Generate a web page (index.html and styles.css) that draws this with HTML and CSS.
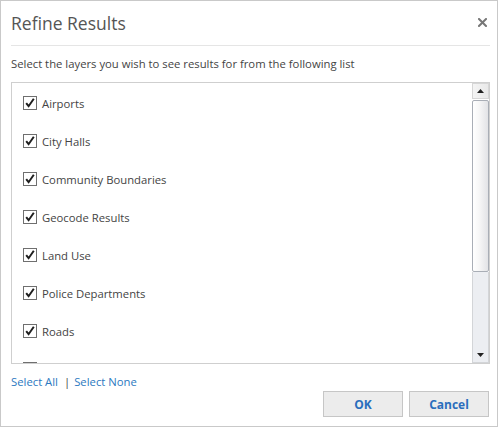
FILE: index.html
```html
<!DOCTYPE html>
<html>
<head>
<meta charset="utf-8">
<link rel="stylesheet" href="styles.css">
</head>
<body>
<div class="dialog">
  <div class="header">
    <h1 class="title">Refine Results</h1>
    <span class="close">
      <svg width="9" height="9" viewBox="0 0 9 9"><path d="M1 1 L8 8 M8 1 L1 8" stroke="#777" stroke-width="2" stroke-linecap="square"/></svg>
    </span>
  </div>
  <p class="desc">Select the layers you wish to see results for from the following list</p>
  <div class="list">
    <ul class="items">
      <li class="item"><span class="cb"><svg width="14" height="14" viewBox="0 0 14 14"><rect x="0.5" y="0.5" width="13" height="13" fill="#fff" stroke="#6f6f6f"/><path d="M3.2 7.2 L5.6 10.2 L10.8 2.8" fill="none" stroke="#1e1e1e" stroke-width="2"/></svg></span>Airports</li>
      <li class="item"><span class="cb"><svg width="14" height="14" viewBox="0 0 14 14"><rect x="0.5" y="0.5" width="13" height="13" fill="#fff" stroke="#6f6f6f"/><path d="M3.2 7.2 L5.6 10.2 L10.8 2.8" fill="none" stroke="#1e1e1e" stroke-width="2"/></svg></span>City Halls</li>
      <li class="item"><span class="cb"><svg width="14" height="14" viewBox="0 0 14 14"><rect x="0.5" y="0.5" width="13" height="13" fill="#fff" stroke="#6f6f6f"/><path d="M3.2 7.2 L5.6 10.2 L10.8 2.8" fill="none" stroke="#1e1e1e" stroke-width="2"/></svg></span>Community Boundaries</li>
      <li class="item"><span class="cb"><svg width="14" height="14" viewBox="0 0 14 14"><rect x="0.5" y="0.5" width="13" height="13" fill="#fff" stroke="#6f6f6f"/><path d="M3.2 7.2 L5.6 10.2 L10.8 2.8" fill="none" stroke="#1e1e1e" stroke-width="2"/></svg></span>Geocode Results</li>
      <li class="item"><span class="cb"><svg width="14" height="14" viewBox="0 0 14 14"><rect x="0.5" y="0.5" width="13" height="13" fill="#fff" stroke="#6f6f6f"/><path d="M3.2 7.2 L5.6 10.2 L10.8 2.8" fill="none" stroke="#1e1e1e" stroke-width="2"/></svg></span>Land Use</li>
      <li class="item"><span class="cb"><svg width="14" height="14" viewBox="0 0 14 14"><rect x="0.5" y="0.5" width="13" height="13" fill="#fff" stroke="#6f6f6f"/><path d="M3.2 7.2 L5.6 10.2 L10.8 2.8" fill="none" stroke="#1e1e1e" stroke-width="2"/></svg></span>Police Departments</li>
      <li class="item"><span class="cb"><svg width="14" height="14" viewBox="0 0 14 14"><rect x="0.5" y="0.5" width="13" height="13" fill="#fff" stroke="#6f6f6f"/><path d="M3.2 7.2 L5.6 10.2 L10.8 2.8" fill="none" stroke="#1e1e1e" stroke-width="2"/></svg></span>Roads</li>
      <li class="item"><span class="cb"><svg width="14" height="14" viewBox="0 0 14 14"><rect x="0.5" y="0.5" width="13" height="13" fill="#fff" stroke="#6f6f6f"/><path d="M3.2 7.2 L5.6 10.2 L10.8 2.8" fill="none" stroke="#1e1e1e" stroke-width="2"/></svg></span></li>
    </ul>
    <div class="scrollbar">
      <div class="sb-btn"><svg width="7" height="4" viewBox="0 0 7 4"><path d="M0 4 L3.5 0 L7 4 Z" fill="#222"/></svg></div>
      <div class="thumb"></div>
      <div class="track"></div>
      <div class="sb-btn sb-down"><svg width="7" height="4" viewBox="0 0 7 4"><path d="M0 0 L3.5 4 L7 0 Z" fill="#222"/></svg></div>
    </div>
  </div>
  <div class="links"><a class="link" href="#">Select All</a><span class="sep">|</span><a class="link" href="#">Select None</a></div>
  <div class="buttons">
    <button class="btn">OK</button>
    <button class="btn">Cancel</button>
  </div>
</div>
</body>
</html>
```
FILE: styles.css
```css
html, body {
  margin: 0;
  padding: 0;
  background: #ffffff;
}
body {
  font-family: "Open Sans", "Noto Sans", sans-serif;
  color: #444;
}
.dialog {
  box-sizing: border-box;
  width: 498px;
  height: 427px;
  border: 1px solid #c9c9c9;
  padding: 0 7px 0 10px;
  display: flex;
  flex-direction: column;
  background: #fff;
}
.header {
  height: 44px;
  border-bottom: 1px solid #e5e5e5;
  display: flex;
  align-items: center;
  justify-content: space-between;
}
.title {
  margin: 0;
  font-size: 17.5px;
  font-weight: 400;
  color: #555;
  line-height: 24px;
  padding-bottom: 0;
}
.close {
  display: flex;
  margin-right: 3px;
  margin-top: -2px;
}
.desc {
  margin: 0;
  padding-top: 10px;
  height: 26px;
  font-size: 11.3px;
  line-height: 16px;
  color: #444;
}
.list {
  box-sizing: border-box;
  height: 282px;
  border: 1px solid #cfcfcf;
  display: flex;
  overflow: hidden;
}
.items {
  list-style: none;
  margin: 0;
  padding: 1px 0 0 11px;
  flex: 1;
  overflow: hidden;
}
.item {
  height: 38px;
  display: flex;
  align-items: center;
  font-size: 11.3px;
  color: #444;
}
.cb {
  display: flex;
  margin-right: 5px;
}
.scrollbar {
  width: 17px;
  display: flex;
  flex-direction: column;
}
.sb-btn {
  box-sizing: border-box;
  height: 16px;
  border: 1px solid #d6d6d6;
  background: linear-gradient(to right, #f4f4f4, #e9e9e9);
  display: flex;
  align-items: center;
  justify-content: center;
}
.thumb {
  box-sizing: border-box;
  margin-top: 1px;
  height: 172px;
  border: 1px solid #a9aeb6;
  border-radius: 2px;
  background: linear-gradient(to right, #ffffff 0%, #f7f7f7 40%, #e2e3e6 100%);
}
.track {
  flex: 1;
  box-sizing: border-box;
  border-left: 1px solid #d3d5d8;
  border-right: 1px solid #d3d5d8;
  background: #eceef2;
}
.sb-down {
  border-top: none;
  background: #eceef2;
  border-color: #d3d5d8;
}
.links {
  height: 26px;
  display: flex;
  align-items: flex-end;
  font-size: 11.3px;
  line-height: 16px;
  color: #444;
}
.link {
  color: #2b79bf;
  text-decoration: none;
}
.sep {
  margin: 0 4px 0 6px;
}
.buttons {
  display: flex;
  justify-content: flex-end;
  gap: 6px;
  margin-top: 1px;
  padding-right: 1px;
}
.btn {
  box-sizing: border-box;
  width: 80px;
  height: 26px;
  border: 1px solid #c6c6c6;
  background: #ececec;
  color: #2a6ebd;
  font-family: "Open Sans", "Noto Sans", sans-serif;
  font-weight: 700;
  font-size: 12px;
  padding: 0;
}
```
